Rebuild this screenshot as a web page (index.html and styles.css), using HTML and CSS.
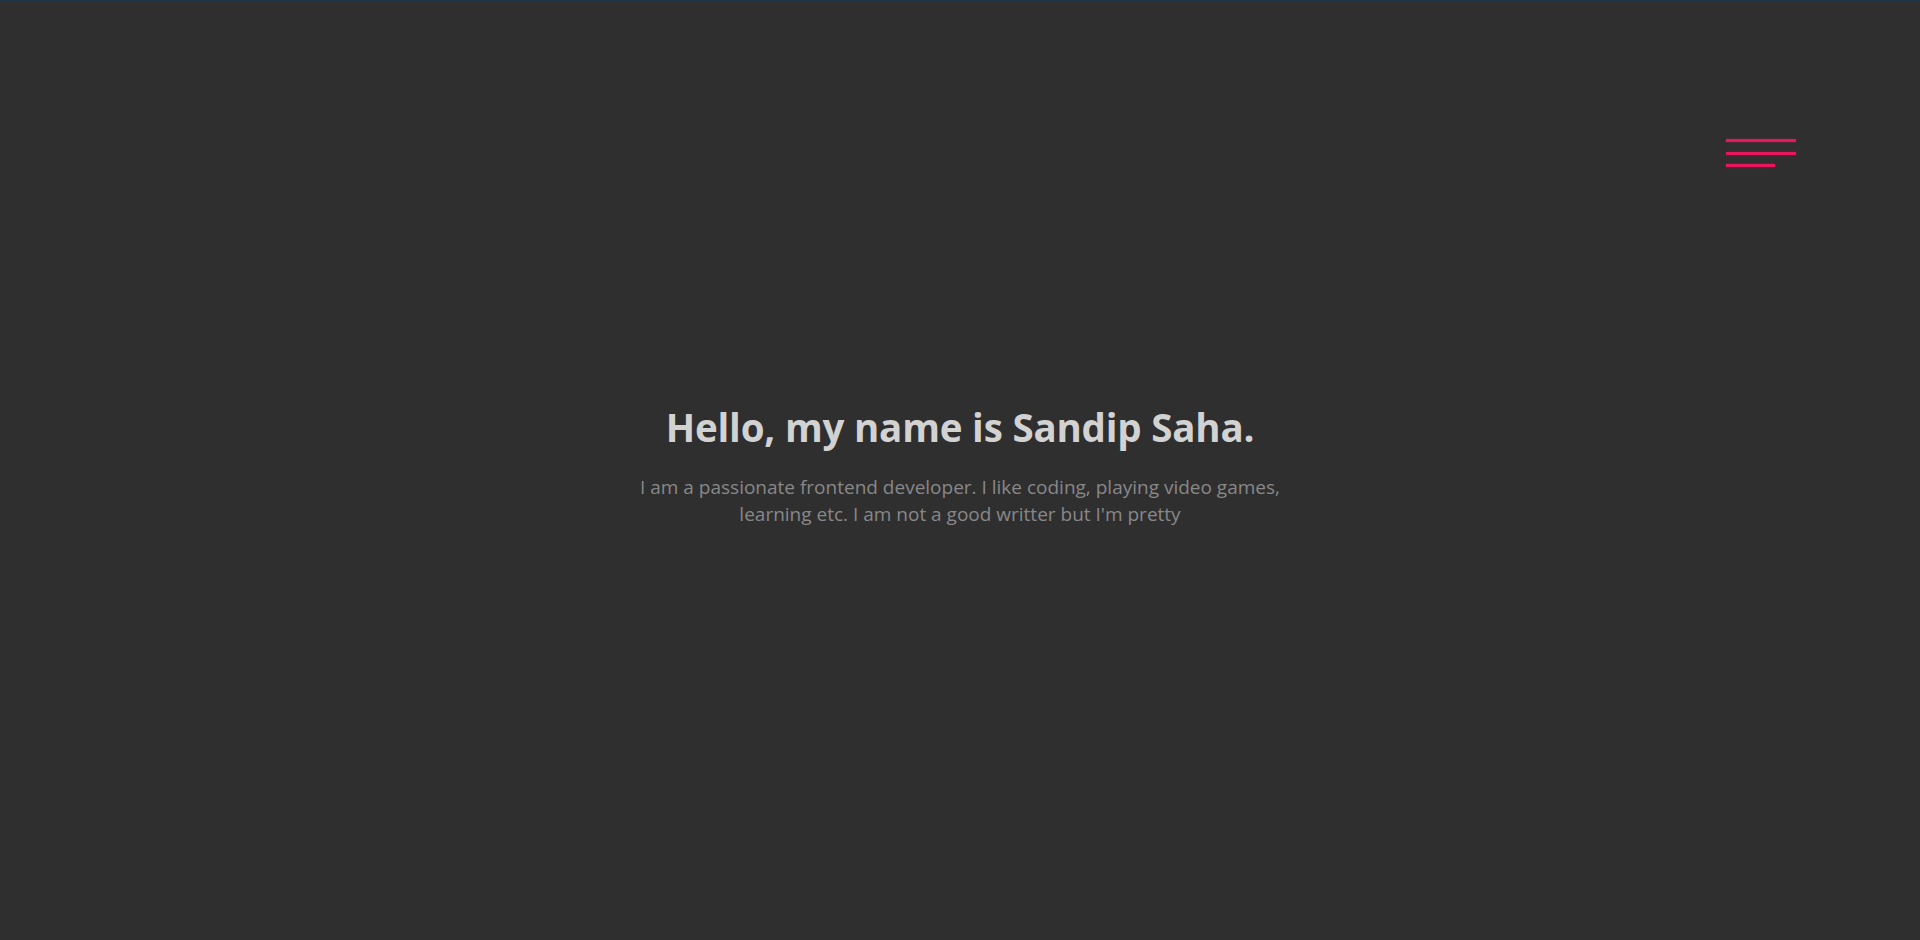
FILE: index.html
```html
<!DOCTYPE html>
<html lang="en">
<head>
<meta charset="utf-8">
<title>Sandip Saha</title>
<link rel="stylesheet" href="styles.css">
</head>
<body>
<div class="page">
  <header class="topbar">
    <button class="menu" aria-label="Menu">
      <span class="line"></span>
      <span class="line"></span>
      <span class="line short"></span>
    </button>
  </header>
  <main class="hero">
    <h1 class="title">Hello, my name is Sandip Saha.</h1>
    <p class="intro">I am a passionate frontend developer. I like coding, playing video games, learning etc. I am not a good writter but I'm pretty</p>
  </main>
</div>
</body>
</html>
```
FILE: styles.css
```css
html, body {
  margin: 0;
  padding: 0;
}
body {
  background: #2f2f2f;
  font-family: "Open Sans", "Noto Sans", sans-serif;
  border-top: 2px solid #1f3349;
}
.page {
  height: 938px;
  display: flex;
  flex-direction: column;
}
.topbar {
  display: flex;
  justify-content: flex-end;
  padding: 137px 124px 0 0;
}
.menu {
  background: none;
  border: 0;
  padding: 0;
  width: 70px;
  display: flex;
  flex-direction: column;
  gap: 9.5px;
  cursor: pointer;
}
.line {
  display: block;
  height: 3px;
  width: 70px;
  background: #e8175d;
  box-shadow: 0 0 3px rgba(232, 23, 93, 0.35);
}
.line.short {
  width: 49px;
}
.hero {
  display: flex;
  flex-direction: column;
  align-items: center;
  padding-top: 237px;
}
.title {
  margin: 0;
  color: #d2d2d2;
  font-size: 38.5px;
  font-weight: 700;
  letter-spacing: -0.2px;
  line-height: 1.2;
}
.intro {
  margin: 24px 0 0;
  width: 650px;
  text-align: center;
  color: #888888;
  font-size: 19px;
  line-height: 27px;
}
```
